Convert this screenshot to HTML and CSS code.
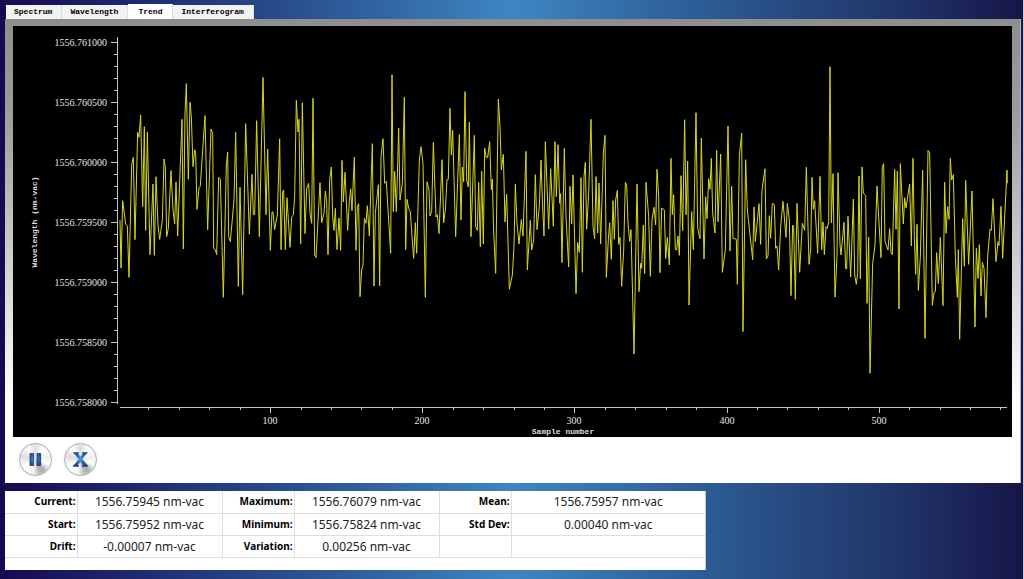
FILE: index.html
```html
<!DOCTYPE html>
<html lang="en">
<head>
<meta charset="utf-8">
<title>Wavelength trend</title>
<link rel="stylesheet" href="styles.css">
</head>
<body class="app">
<nav class="tabs" role="tablist">
  <button class="tab" role="tab">Spectrum</button>
  <button class="tab" role="tab">Wavelength</button>
  <button class="tab tab-active" role="tab" aria-selected="true">Trend</button>
  <button class="tab" role="tab">Interferogram</button>
</nav>
<main class="panel">
  <svg class="chart" viewBox="0 0 999 411" role="img" aria-label="Wavelength trend chart">
    <path id="axes" class="axis"/>
    <polyline id="trace" class="trace"/>
    <g id="labels" class="labels"></g>
    <text class="title" x="550" y="408" text-anchor="middle">Sample number</text>
    <text class="title" transform="translate(24 196) rotate(-90)" text-anchor="middle">Wavelength (nm-vac)</text>
  </svg>
  <div class="controls">
    <button class="round" aria-label="Pause">
      <svg class="icon" viewBox="0 0 17 17"><defs><radialGradient id="blue" gradientUnits="userSpaceOnUse" cx="8" cy="8" r="8"><stop offset="0" stop-color="#35a8ec"/><stop offset=".5" stop-color="#2868b4"/><stop offset="1" stop-color="#203c80"/></radialGradient></defs><path fill="url(#blue)" stroke="#26316a" stroke-width=".8" d="M3 2.500h3.700v12H3zM10 2.500h3.700v12H10z"/></svg>
    </button>
    <button class="round" aria-label="Clear">
      <svg class="icon" viewBox="0 0 17 17"><path fill="url(#blue)" stroke="url(#blue)" stroke-width=".5" d="M1.500 1.500h5.200v.8l-.6.600L8.500 6.200l2.400-3.300-.6-.6v-.8h4.900v.8l-1.300.7-3.700 4.900 4.200 5.700 1.400.8v1.100h-5.600v-1.100l.7-.6-2.500-3.400L5.900 13.800l.7.600v1.100H1.300v-1.100l1.400-.8 4-5.400L2.900 3l-1.400-.7z"/></svg>
    </button>
  </div>
</main>
<section class="stats">
  <table class="grid">
    <colgroup><col class="c-label"><col class="c-value"><col class="c-label"><col class="c-value"><col class="c-label"><col></colgroup>
    <tbody>
      <tr><th>Current:</th><td>1556.75945 nm-vac</td><th>Maximum:</th><td>1556.76079 nm-vac</td><th>Mean:</th><td>1556.75957 nm-vac</td></tr>
      <tr><th>Start:</th><td>1556.75952 nm-vac</td><th>Minimum:</th><td>1556.75824 nm-vac</td><th>Std Dev:</th><td>0.00040 nm-vac</td></tr>
      <tr><th>Drift:</th><td>-0.00007 nm-vac</td><th>Variation:</th><td>0.00256 nm-vac</td><th></th><td></td></tr>
    </tbody>
  </table>
</section>
<script src="chart.js"></script>
</body>
</html>
```
FILE: styles.css
```css
* { box-sizing: border-box; }
.app {
  margin: 0;
  min-height: 100vh;
  padding: 4px 2px 8px 5px;
  border-right: 1px solid #c9cbd6;
  background: linear-gradient(90deg, #17094f 0%, #1c1f66 9%, #29508f 29%, #3e86c2 50%, #2c5b94 69%, #203468 88%, #171548 100%);
  font-family: "Noto Sans", "Open Sans", sans-serif;
}
.tabs { display: flex; align-items: flex-end; height: 15px; padding-left: 1px; }
.tab {
  height: 14px;
  padding: 0 9px 0 8px;
  border: 0;
  border-right: 1px solid #dcdcdc;
  background: #f2f2f2;
  color: #000;
  font: bold 8px/14px "Liberation Mono", monospace;
}
.tab-active { height: 15px; padding: 0 10px; background: #fff; }
.panel {
  padding: 7px 8px 7px;
  border-right: 1px solid #b5b8c4;
  background: linear-gradient(180deg, #8e8e8e 0%, #9c9c9c 20%, #fff 82%);
}
.chart { display: block; width: 100%; height: auto; background: #000; }
.axis { fill: none; stroke: #c4c4c4; stroke-width: 1; }
.trace { fill: none; stroke: #d8d81c; stroke-width: 1; stroke-linejoin: bevel; }
.labels { fill: #e6e6e6; font: 10px "Liberation Serif", serif; }
.title { fill: #dedede; font: bold 8px "Liberation Mono", monospace; }
.controls { display: flex; gap: 12px; padding: 6px 6px 0; }
.round {
  display: grid;
  place-items: center;
  width: 33px;
  height: 33px;
  padding: 0;
  border: 1px solid #aaa;
  border-radius: 50%;
  background: conic-gradient(#ddd 0deg, #fff 35deg, #eee 80deg, #fff 110deg, #aaa 145deg, #bbb 165deg, #f4f4f4 190deg, #fff 240deg, #ddd 285deg, #fff 325deg, #ddd 360deg);
  box-shadow: inset 0 0 2px #fff, 0 0 3px #e2f1f3;
}
.icon { width: 17px; height: 17px; }
.stats {
  width: 69%;
  min-height: 79px;
  margin-top: 8px;
  border-right: 1px solid #c6cad2;
  background: #fff;
}
.grid { width: 100%; table-layout: fixed; border-collapse: collapse; color: #222; }
.c-label { width: 72px; }
.c-value { width: 145px; }
.grid th, .grid td { height: 22px; padding: 0; border: 1px solid #dedede; border-width: 0 1px 1px 0; line-height: 21px; white-space: nowrap; }
.grid th { padding-right: 1px; text-align: right; font-size: 10px; font-weight: bold; color: #000; }
.grid td { text-align: center; font-size: 12px; }
.grid td:last-child { border-right: 0; }
```
FILE: chart.js
```js
// Trace recorded in sections; each has a start offset, in thirds of a unit.
const sections = [
  [0, "15,510 18,654 23,452 32,522 37,528 42,682 50,345 55,322 60,569 68,247 72,262 77,195 83,470 88,230 92,541 97,246 105,614 114,402 118,616 123,380 129,525 134,568 142,510 147,327 151,353 155,560 160,535 168,362 174,480 179,522 183,396 188,558 201,208 205,597 210,190 214,101 220,388 225,157 229,200 234,350 239,299 242,308 246,478 252,413 256,408 261,330 270,197 278,539 288,237 293,250 296,595 301,599 305,614 311,382 316,388 325,742 334,345 338,306 341,560 346,575 357,450 362,247 370,709 375,412 383,734 392,221 397,370 403,553 411,373 415,494 419,494 425,212 433,560 444,82 453,494 458,297 466,601 471,486 474,486 479,539 487,495 494,266 498,599 503,425 506,420 511,599 516,443 525,592"],
  [525, "5,500 10,495 14,440 19,151 24,246 27,208 32,582 37,158 45,551 50,415 56,400 60,490 65,520 69,145 74,615 78,623 90,398 95,518 102,490 106,423 110,455 114,614 119,390 124,351 128,500 132,541 136,475 141,599 147,504 152,601 156,331 160,456 165,367 173,541 178,455 182,417 186,482 193,321 198,601 202,470 206,461 210,740 215,660 219,645 223,505 228,520 232,467 238,558 247,281 252,708 256,490 265,404 269,708 273,320 279,266 284,400 289,394 302,610 306,74 310,485 314,364 319,485 326,234 330,450 337,400 343,142 347,599 351,448 356,475 361,485 366,560 371,625 376,518 380,610 388,330 393,290 399,340 406,742 411,395 417,420 420,498 425,485 430,277 438,501 442,494 447,551 456,329 461,518 466,480 471,388 475,388 480,175 484,315 488,241 497,560 508,254 513,510 517,351 521,396"],
  [1050, "0,125 5,390 10,411 13,217 18,560 28,256 32,530 37,541 41,397 46,590 50,364 55,582 59,294 64,323 68,322 74,275 79,419 82,387 86,545 92,670 100,147 105,230 109,360 115,313 120,516 125,433 133,718 142,675 147,590 151,402 156,520 162,582 169,509 174,558 183,304 187,660 196,511 200,600 206,570 211,374 216,539 223,470 228,330 232,450 237,558 241,275 251,537 257,356 265,529 270,275 274,440 279,284 284,460 287,431 291,638 298,295 303,500 311,651 315,409 320,522 324,375 333,731 338,577 343,607 348,383 352,667 357,380 361,337 365,538 371,430 378,208 384,530 389,566 393,380 398,549 402,399 407,582 415,310 420,256 424,682 430,570 434,518 439,628 444,452 448,568 452,450 457,421 461,583 465,562 470,709 476,600 481,397 485,405 489,520 494,574 498,539 507,912 516,402 522,725 527,640 530,655"],
  [1575, "10,525 14,670 18,397 26,500 31,679 36,510 42,472 47,525 51,358 56,440 60,668 65,474 73,480 77,626 82,562 88,645 93,325 97,494 101,434 106,598 110,600 114,558 118,616 123,377 128,542 134,209 138,494 143,333 147,765 155,485 160,599 168,188 173,535 180,566 184,264 192,627 197,440 201,506 206,386 210,418 214,325 218,490 225,549 230,301 234,515 242,312 247,667 256,600 264,228 270,603 275,409 279,565 289,568 292,703 298,320 305,249 309,845 317,329 322,480 338,629 342,471 346,575 357,461 362,583 366,420 375,356 379,627 384,618 388,497 392,565 397,460 403,464 407,595 411,588 416,660 422,530 429,454 438,562 442,460 448,510 453,737 458,525 461,530 466,748 471,460 479,667 487,520 494,541 499,352 507,643 512,600 516,382 520,478 524,452 533,610 540,379 545,599 549,516 553,614 558,530 562,535 566,515"],
  [2130, "15,50 19,518 24,371 30,741 36,620 39,368 45,585 48,615 57,517 62,656 65,657 69,499 77,681 85,447 89,675 94,703 98,670 102,378 106,686 111,351 115,430 122,437 126,760 131,561 135,970 143,640 150,585 156,408 161,500 168,623 172,350 176,341 180,575 189,600 194,536 198,607 202,614 209,358 213,538 217,363 222,777 226,341 235,522 239,443 243,474 254,402 259,588 264,325 268,560 272,673 276,523 280,721 286,620 293,361 300,865 309,301 314,309 322,766 327,727 331,725 335,608 340,701 346,562 354,767 359,397 363,550 368,470 372,508 376,325 380,390 385,374 391,620 397,742 400,599 404,868 413,506 418,649 422,391 431,643 441,423 450,831 454,595 459,685 463,584 468,738 472,637 477,655 483,803 488,620 495,537 499,541 504,446 513,635 519,575 522,587 528,469 533,625 546,360 547,400"]
];
const points = sections.flatMap(([start, list]) => list.split(" ").map(pair => {
  const [x, y] = pair.split(",").map(Number);
  return `${(x + start) / 3 + 102},${y / 3 + 24}`;
}));
document.getElementById("trace").setAttribute("points", points.join(" "));

const labels = document.getElementById("labels");
function label(text, x, y, anchor) {
  const node = document.createElementNS("http://www.w3.org/2000/svg", "text");
  node.textContent = text;
  node.setAttribute("x", x);
  node.setAttribute("y", y);
  node.setAttribute("text-anchor", anchor);
  labels.append(node);
}
let path = "M104.5 11V378M107 381.5H994";
for (let i = 0; i <= 30; i++) {
  const y = 16.5 + i * 12;
  path += `M${i % 5 ? 101 : 98} ${y}H104`;
  if (i % 5 === 0) label((1556.761 - i * 0.0001).toFixed(6), 94, y + 3, "end");
}
for (let i = 1; i <= 29; i++) {
  const x = Math.round(105 + i * 30.43) + 0.5;
  path += `M${x} 382V${i % 5 ? 384 : 387}`;
  if (i % 5 === 0) label(i * 20, x - 0.5, 398, "middle");
}
document.getElementById("axes").setAttribute("d", path);
```
